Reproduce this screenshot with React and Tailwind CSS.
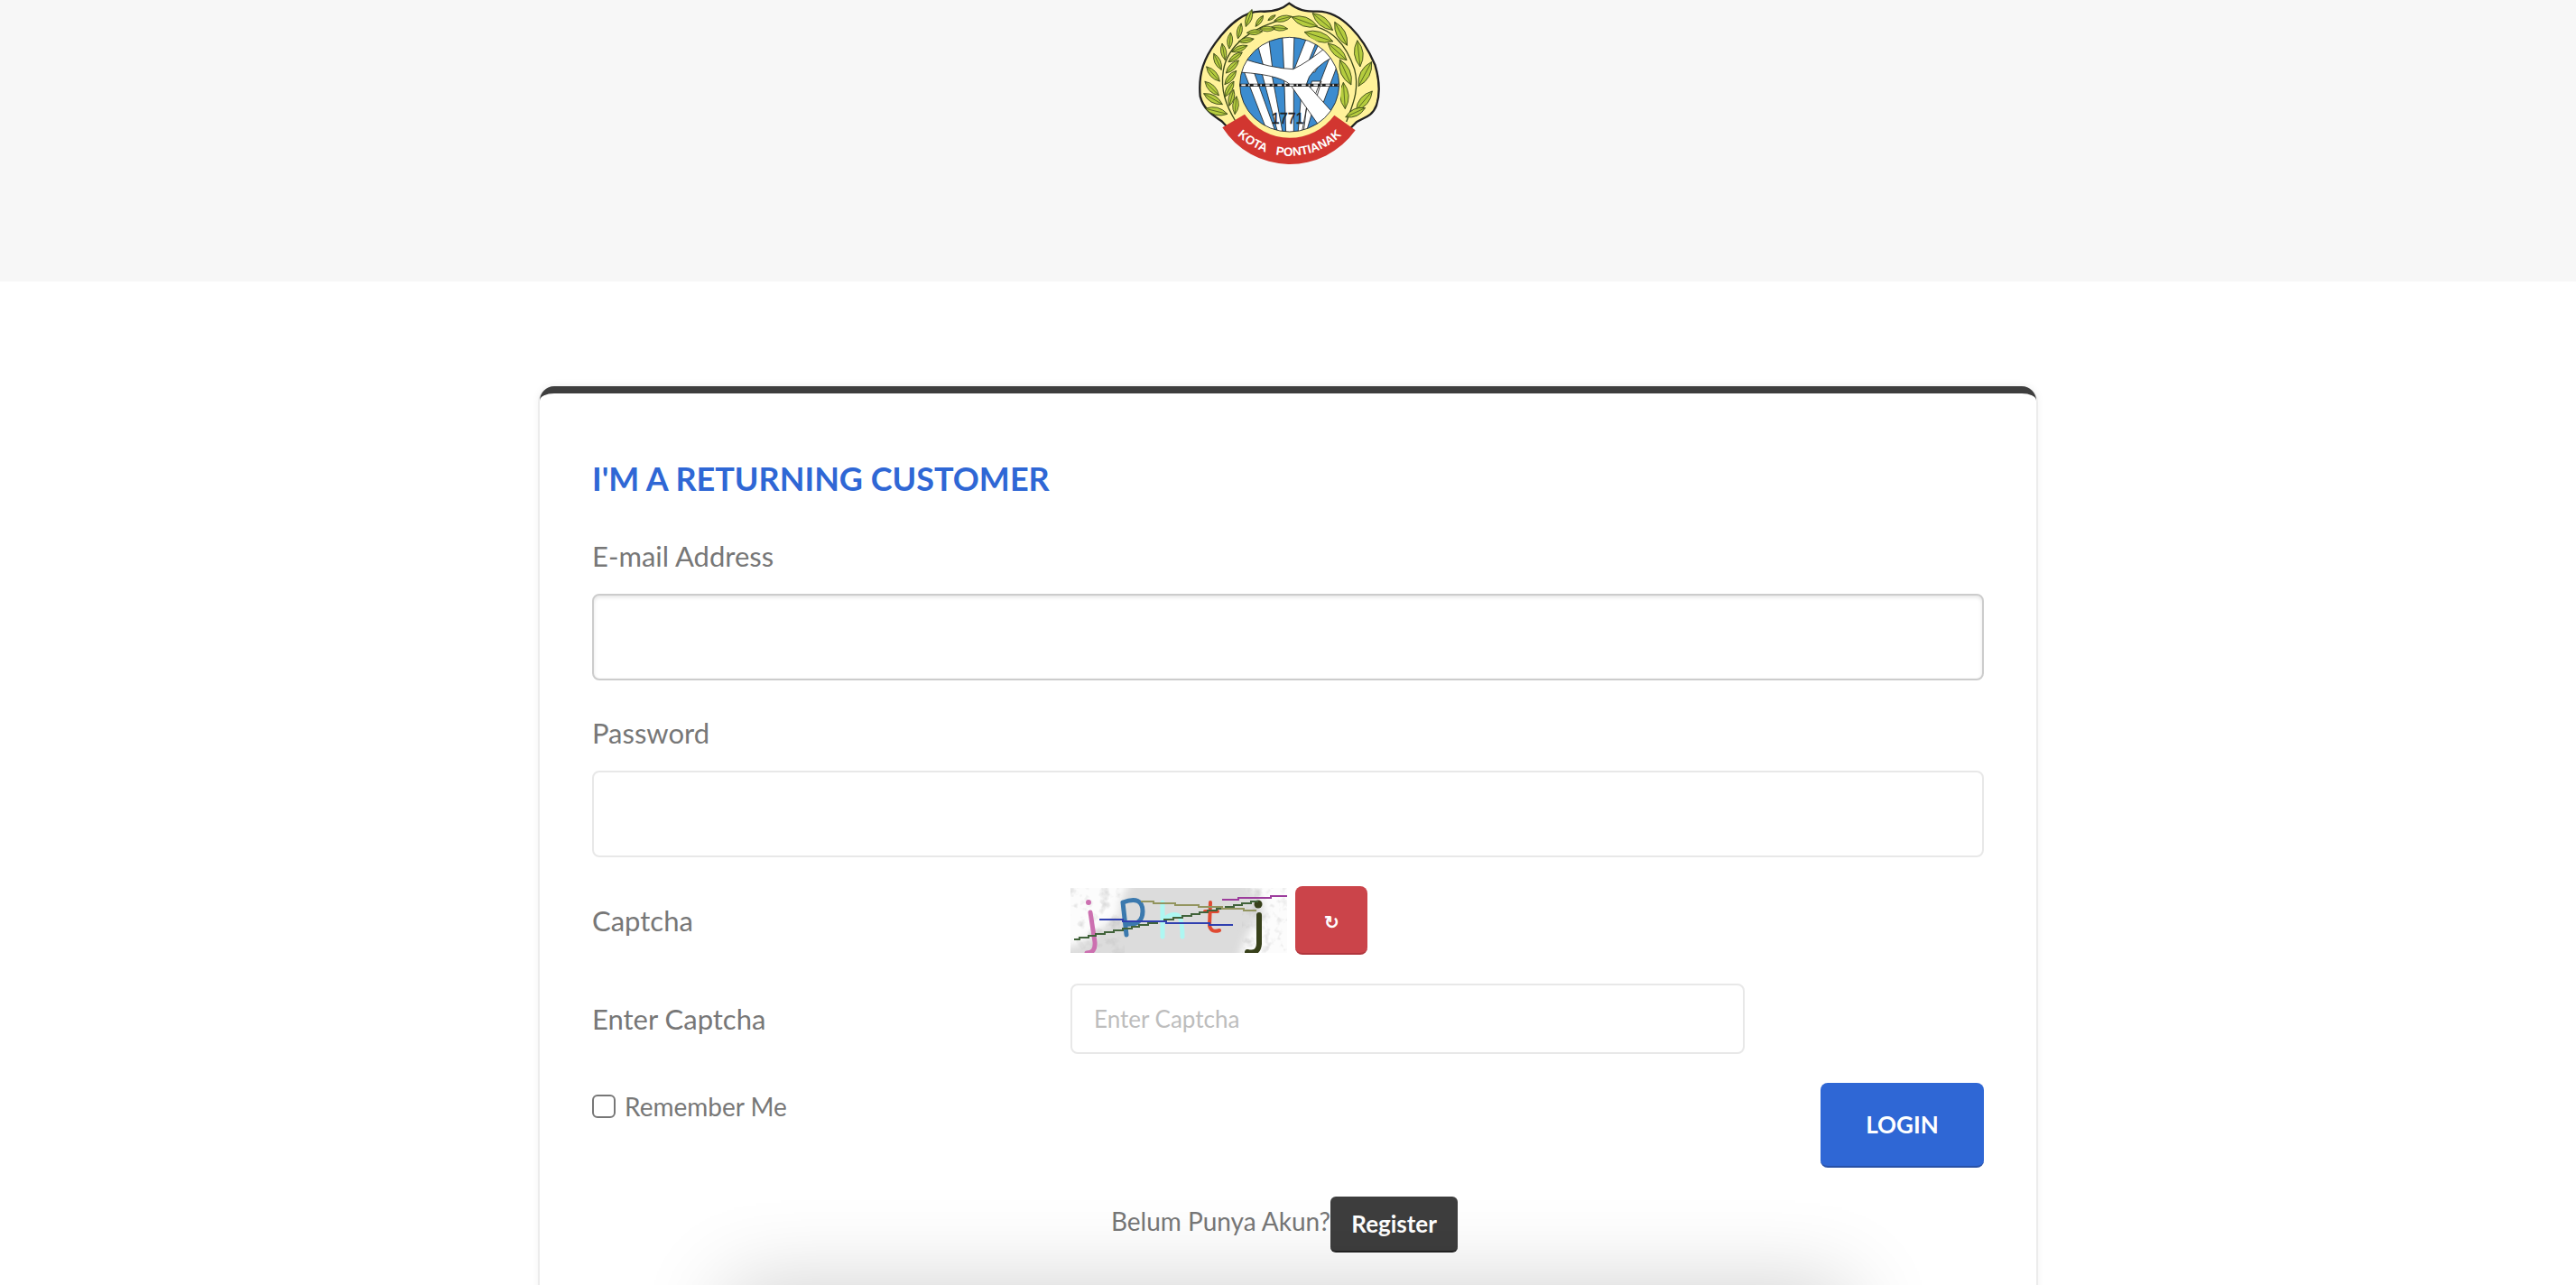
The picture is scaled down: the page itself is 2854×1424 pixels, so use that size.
const LEAVES_LEFT = [
  [334, 62, 30, -14], [322, 93, 28, 5], [297, 59, 15, -35], [282, 96, 26, 0], [256, 70, 22, -55], [240, 107, 26, -5],
  [221, 60, 30, -70], [190, 103, 26, -78], [212, 134, 26, -10], [158, 135, 27, -85],
  [190, 162, 28, -22], [137, 172, 28, 80], [176, 190, 28, -35], [117, 205, 30, 65], [166, 222, 30, -45],
  [102, 246, 33, 48], [160, 258, 30, -50], [98, 294, 33, 45], [156, 296, 30, -60], [102, 329, 36, 30],
  [163, 325, 28, -75], [113, 370, 38, 14], [177, 350, 30, -85],
];
const LEAVES_RIGHT = [
  [406, 72, 46, 20], [466, 72, 44, 40], [453, 122, 50, 18], [527, 112, 44, 62], [515, 172, 42, 42],
  [586, 178, 44, 84], [542, 240, 46, 66], [607, 246, 46, -62], [538, 318, 44, 86], [604, 335, 42, -50], [575, 374, 36, -25],
];

function Leaf({ x, y, l, a }) {
  return (
    <g transform={`translate(${x} ${y}) rotate(${a})`}>
      <path d={`M${-l} 0Q0 ${-l * 0.66} ${l} 0Q0 ${l * 0.66} ${-l} 0Z`} fill="#b5cc3e" stroke="#3c4a1a" strokeWidth="2.5" />
      <path d={`M${-l} 0H${l}`} stroke="#3c4a1a" strokeWidth="2" />
    </g>
  );
}

function CityEmblem() {
  return (
    <svg viewBox="-9 0 720 600" className="h-[200px] w-[240px]" role="img" aria-label="Kota Pontianak">
      <path
        d="M355 11C384 34 408 38 450 38C530 38 600 122 640 215C654 262 658 310 645 350C632 388 600 392 580 405L545 440H165L133 405C110 388 72 370 59 320C52 240 75 190 110 142C150 88 200 36 262 38C300 40 330 32 355 11Z"
        fill="#fff29a" stroke="#222" strokeWidth="7"
      />
      <path d="M345 62C230 90 150 150 136 235C126 300 145 350 176 402M400 80C500 90 545 150 572 230C590 300 565 350 545 405" fill="none" stroke="#3c4a1a" strokeWidth="4" />
      {LEAVES_LEFT.map(([x, y, l, a]) => <Leaf key={`${x}-${y}`} x={x} y={y} l={l} a={a} />)}
      {LEAVES_RIGHT.map(([x, y, l, a]) => <Leaf key={`${x}-${y}`} x={x} y={y} l={l} a={a} />)}
      <ellipse cx="356" cy="290" rx="172" ry="180" fill="#fff29a" />
      <clipPath id="disc"><ellipse cx="356" cy="281" rx="165" ry="157" /></clipPath>
      <g clipPath="url(#disc)" stroke="#222" strokeWidth="2.5">
        <rect x="180" y="110" width="350" height="340" fill="#3c8ccf" />
        <path
          d="M332 115H372L368 240H338ZM245 130L287 125L301 240H275ZM417 115H455L405 240H368ZM465 120L495 150L440 240H410ZM200 225L235 232L312 445H285ZM262 235L296 240L334 445H318ZM338 250H370L370 445H344ZM398 280H422L402 445H384ZM430 270H462L410 445H396ZM490 190L525 190L452 385L428 350Z"
          fill="#fff"
        />
        <path d="M185 190Q300 228 368 230Q420 205 480 155L512 182Q420 232 413 278L500 375L452 415L366 292Q345 250 190 240Z" fill="#fff" />
      </g>
      <ellipse cx="356" cy="281" rx="165" ry="157" fill="none" stroke="#222" strokeWidth="2.5" />
      <path d="M190 283H521" stroke="#222" strokeWidth="10" />
      <path d="M196 283H518" stroke="#fff" strokeWidth="5" strokeDasharray="14 9 5 12" />
      <text x="350" y="410" textAnchor="middle" fontSize="48" fill="#222" stroke="#222" fontFamily="Liberation Sans, sans-serif">1771</text>
      <path d="M207 380A183 183 0 0 0 505 383L575 433A267 267 0 0 1 133 424Z" fill="#d23630" />
      <path id="ribbon" d="M180 447A253 253 0 0 0 540 439" fill="none" />
      <g fontSize="40" fontWeight="700" fill="#fff" fontFamily="Liberation Sans, sans-serif">
        <text><textPath href="#ribbon" startOffset="4">KOTA</textPath></text>
        <text><textPath href="#ribbon" startOffset="148">PONTIANAK</textPath></text>
      </g>
    </svg>
  );
}

function CaptchaImage() {
  return (
    <svg viewBox="0 0 240 72" className="h-[72px] w-[240px]" role="img" aria-label="Captcha">
      <defs>
        <filter id="soft"><feGaussianBlur stdDeviation="5" /></filter>
        <filter id="speckle" x="0" y="0" width="1" height="1">
          <feTurbulence type="fractalNoise" baseFrequency="0.09" numOctaves="3" seed="4" />
          <feColorMatrix values="0 0 0 0 .5  0 0 0 0 .5  0 0 0 0 .5  2.4 0 0 0 -1.2" />
        </filter>
        <clipPath id="frame"><rect width="240" height="72" /></clipPath>
      </defs>
      <g clipPath="url(#frame)">
        <rect width="240" height="72" fill="#dcdcdc" />
        <path d="M-20-20H75Q50 15 55 30Q35 45 10 62L-20 70ZM180-20H260V90H185Q190 50 215 30Q215 10 180-20Z" fill="#fcfcfc" filter="url(#soft)" />
        <rect width="60" height="72" filter="url(#speckle)" opacity=".6" />
        <rect x="190" width="50" height="72" filter="url(#speckle)" opacity=".6" />
        <g fill="none" strokeLinecap="round" strokeWidth="5">
          <path d="M22 27L27 60Q28 72 18 72" stroke="#cc70b0" />
          <circle cx="20" cy="16" r="3" fill="#cc70b0" stroke="none" />
          <path d="M58 16L62 52M58 16Q80 8 80 26Q80 42 61 40" stroke="#3b79ae" />
          <path d="M102 16V54M103 36Q110 28 118 30Q124 31 124 54" stroke="#aef7f2" />
          <path d="M155 16L154 42Q156 50 165 47M149 26H163" stroke="#e04a32" strokeWidth="4" />
          <path d="M209 30L209 62Q208 74 196 71" stroke="#37401a" strokeWidth="6" />
          <circle cx="208" cy="18" r="4.5" fill="#37401a" stroke="none" />
        </g>
        <g fill="none" strokeWidth="2">
          <path d="M4 57H10V55H20V53H28V51H38V49H48V47H58V45H68V43H76V41H86V39H96V37H104V35H114V33H124V31H134V29H143V27H152V25H162V23H172V21H181V19H190V17H200V15H208" stroke="#41633a" />
          <path d="M78 15H92V17H116V19H142V21H168V23H192V25H206" stroke="#93955f" />
          <path d="M32 35H58V37H106V39H154V41H180" stroke="#3040b0" />
          <path d="M168 13H186V11H222V9H240" stroke="#9c3c9c" />
        </g>
      </g>
    </svg>
  );
}

export default function App() {
  return (
    <div className="relative h-screen overflow-hidden bg-white font-['Lato',sans-serif] text-[#777]">
      <header className="flex h-[312px] justify-center bg-[#f7f7f7]">
        <CityEmblem />
      </header>

      <main className="px-6 pt-[116px]">
        <div className="mx-auto max-w-[1658px] rounded-t-[16px] border-t-8 border-[#3e3e3e] bg-white px-[58px] pt-[70px] pb-40 shadow-[0_2px_0_2px_#ececec,0_0_10px_rgba(0,0,0,0.08)]">
          <form onSubmit={(e) => e.preventDefault()}>
            <h1 className="text-[36px] leading-[48px] font-bold text-[#2f67d5]">I'M A RETURNING CUSTOMER</h1>

            <label htmlFor="email" className="mt-8 block text-[31px] leading-[60px]">E-mail Address</label>
            <input id="email" type="email" className="mt-3 block h-24 w-full rounded-lg border-2 border-[#ccc] px-6 text-[26px] shadow-[inset_0_2px_4px_rgba(0,0,0,0.1)] outline-none" />

            <label htmlFor="password" className="mt-7 block text-[31px] leading-[60px]">Password</label>
            <input id="password" type="password" className="mt-3 block h-24 w-full rounded-lg border-2 border-[#e8e8e8] px-6 text-[26px] outline-none" />

            <div className="mt-8 flex items-center">
              <span className="w-[530px] text-[31px] leading-[60px]">Captcha</span>
              <CaptchaImage />
              <button type="button" aria-label="Reload captcha" className="ml-[9px] flex h-[76px] w-20 items-center justify-center rounded-lg border-b-2 border-[#b0353c] bg-[#cb444a] pt-1 text-[20px] font-bold text-white">↻</button>
            </div>

            <div className="mt-8 flex items-center">
              <label htmlFor="captcha" className="w-[530px] text-[31px] leading-[60px]">Enter Captcha</label>
              <input id="captcha" placeholder="Enter Captcha" className="h-[78px] w-[747px] rounded-lg border-2 border-[#e8e8e8] px-6 text-[26px] outline-none placeholder:text-[#bdbdbd]" />
            </div>

            <div className="mt-8 flex items-start justify-between">
              <div className="flex items-center gap-[10px]">
                <input id="remember" type="checkbox" className="size-[26px] appearance-none rounded-md border-2 border-[#777] bg-white" />
                <label htmlFor="remember" className="text-[28px] leading-[52px]">Remember Me</label>
              </div>
              <button type="submit" className="h-[94px] w-[181px] rounded-lg border-b-2 border-[#2850a5] bg-[#2f67d5] text-[26px] font-bold text-white">LOGIN</button>
            </div>

            <div className="mt-8 flex items-start justify-center pr-2">
              <span className="text-[28px] leading-[54px]">Belum Punya Akun?</span>
              <a href="#register" className="flex h-[62px] w-[141px] items-center justify-center rounded-md border-b-2 border-[#222] bg-[#3e3e3e] text-[26px] font-bold text-white">Register</a>
            </div>
          </form>
        </div>
      </main>

      <div className="pointer-events-none absolute inset-x-0 top-full mx-auto h-96 max-w-[1242px] shadow-[0_0_90px_rgba(0,0,0,0.19)]" />
    </div>
  );
}
